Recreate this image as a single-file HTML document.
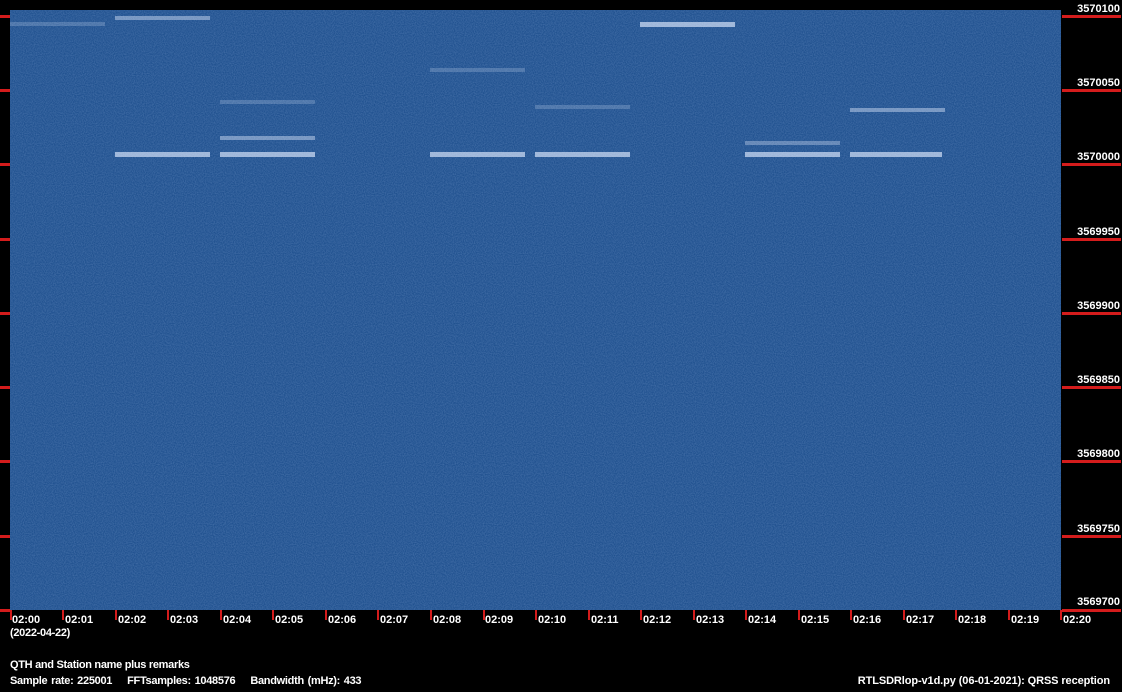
<!DOCTYPE html>
<html><head><meta charset="utf-8"><style>
html,body{margin:0;padding:0;background:#000;width:1122px;height:692px;overflow:hidden;position:relative;font-family:"Liberation Sans",sans-serif;font-weight:bold;color:#fff;font-size:11px}
.plot{position:absolute;left:10px;top:10px;width:1051px;height:600px;background:#215290;overflow:hidden}
.s{position:absolute;height:5px;background:rgba(225,235,255,.65)}
.f{position:absolute;height:4px;background:rgba(200,215,240,.25)}
.hr{position:absolute;left:1062px;width:59px;height:3px;background:#d41c1c}
.hl{position:absolute;left:0;width:10px;height:3px;background:#d41c1c}
.yl{position:absolute;right:2px;font-size:11px;line-height:11px}
.vt{position:absolute;top:610px;width:2px;height:10px;background:#d41c1c}
.xl{position:absolute;top:614px;font-size:11px;line-height:12px}
.t{position:absolute;font-size:11px;line-height:12px;letter-spacing:-0.3px}
</style></head><body>
<div class="plot">
<svg width="1051" height="600" style="position:absolute;left:0;top:0"><filter id="n"><feTurbulence type="fractalNoise" baseFrequency="0.9" numOctaves="1" seed="3"/><feColorMatrix values="0 0 0 0 0.55  0 0 0 0 0.7  0 0 0 0 1  0 0 0 0.35 -0.1"/></filter><rect width="1051" height="600" filter="url(#n)"/></svg>
<div class="s" style="left:105px;top:142px;width:95px"></div>
<div class="s" style="left:210px;top:142px;width:95px"></div>
<div class="s" style="left:420px;top:142px;width:95px"></div>
<div class="s" style="left:525px;top:142px;width:95px"></div>
<div class="s" style="left:735px;top:142px;width:95px"></div>
<div class="s" style="left:840px;top:142px;width:92px"></div>
<div class="f" style="left:210px;top:126px;width:95px;background:rgba(220,230,250,.45)"></div>
<div class="f" style="left:735px;top:131px;width:95px;background:rgba(220,230,250,.35)"></div>
<div class="f" style="left:840px;top:98px;width:95px;background:rgba(220,230,250,.45)"></div>
<div class="s" style="left:630px;top:12px;width:95px"></div>
<div class="f" style="left:105px;top:6px;width:95px;background:rgba(220,230,250,.45)"></div>
<div class="f" style="left:525px;top:95px;width:95px"></div>
<div class="f" style="left:210px;top:90px;width:95px"></div>
<div class="f" style="left:0;top:12px;width:95px"></div>
<div class="f" style="left:420px;top:58px;width:95px"></div>
</div>
<div class="hr" style="top:15px"></div><div class="hl" style="top:15px"></div><div class="yl" style="top:4px">3570100</div>
<div class="hr" style="top:89px"></div><div class="hl" style="top:89px"></div><div class="yl" style="top:78px">3570050</div>
<div class="hr" style="top:163px"></div><div class="hl" style="top:163px"></div><div class="yl" style="top:152px">3570000</div>
<div class="hr" style="top:238px"></div><div class="hl" style="top:238px"></div><div class="yl" style="top:227px">3569950</div>
<div class="hr" style="top:312px"></div><div class="hl" style="top:312px"></div><div class="yl" style="top:301px">3569900</div>
<div class="hr" style="top:386px"></div><div class="hl" style="top:386px"></div><div class="yl" style="top:375px">3569850</div>
<div class="hr" style="top:460px"></div><div class="hl" style="top:460px"></div><div class="yl" style="top:449px">3569800</div>
<div class="hr" style="top:535px"></div><div class="hl" style="top:535px"></div><div class="yl" style="top:524px">3569750</div>
<div class="hr" style="top:609px"></div><div class="hl" style="top:609px"></div><div class="yl" style="top:597px">3569700</div>
<div class="vt" style="left:10px"></div><div class="xl" style="left:12px">02:00</div>
<div class="vt" style="left:62px"></div><div class="xl" style="left:65px">02:01</div>
<div class="vt" style="left:115px"></div><div class="xl" style="left:118px">02:02</div>
<div class="vt" style="left:167px"></div><div class="xl" style="left:170px">02:03</div>
<div class="vt" style="left:220px"></div><div class="xl" style="left:223px">02:04</div>
<div class="vt" style="left:272px"></div><div class="xl" style="left:275px">02:05</div>
<div class="vt" style="left:325px"></div><div class="xl" style="left:328px">02:06</div>
<div class="vt" style="left:377px"></div><div class="xl" style="left:380px">02:07</div>
<div class="vt" style="left:430px"></div><div class="xl" style="left:433px">02:08</div>
<div class="vt" style="left:483px"></div><div class="xl" style="left:485px">02:09</div>
<div class="vt" style="left:535px"></div><div class="xl" style="left:538px">02:10</div>
<div class="vt" style="left:588px"></div><div class="xl" style="left:591px">02:11</div>
<div class="vt" style="left:640px"></div><div class="xl" style="left:643px">02:12</div>
<div class="vt" style="left:693px"></div><div class="xl" style="left:696px">02:13</div>
<div class="vt" style="left:745px"></div><div class="xl" style="left:748px">02:14</div>
<div class="vt" style="left:798px"></div><div class="xl" style="left:801px">02:15</div>
<div class="vt" style="left:850px"></div><div class="xl" style="left:853px">02:16</div>
<div class="vt" style="left:903px"></div><div class="xl" style="left:906px">02:17</div>
<div class="vt" style="left:955px"></div><div class="xl" style="left:958px">02:18</div>
<div class="vt" style="left:1008px"></div><div class="xl" style="left:1011px">02:19</div>
<div class="vt" style="left:1060px"></div><div class="xl" style="left:1063px">02:20</div>
<div class="t" style="left:10px;top:627px">(2022-04-22)</div>
<div class="t" style="left:10px;top:659px">QTH and Station name plus remarks</div>
<div class="t" style="left:10px;top:675px;word-spacing:1px">Sample rate: 225001&nbsp;&nbsp;&nbsp; FFTsamples: 1048576&nbsp;&nbsp;&nbsp; Bandwidth (mHz): 433</div>
<div class="t" style="right:12px;top:675px;letter-spacing:-0.1px">RTLSDRlop-v1d.py (06-01-2021): QRSS reception</div>
</body></html>
